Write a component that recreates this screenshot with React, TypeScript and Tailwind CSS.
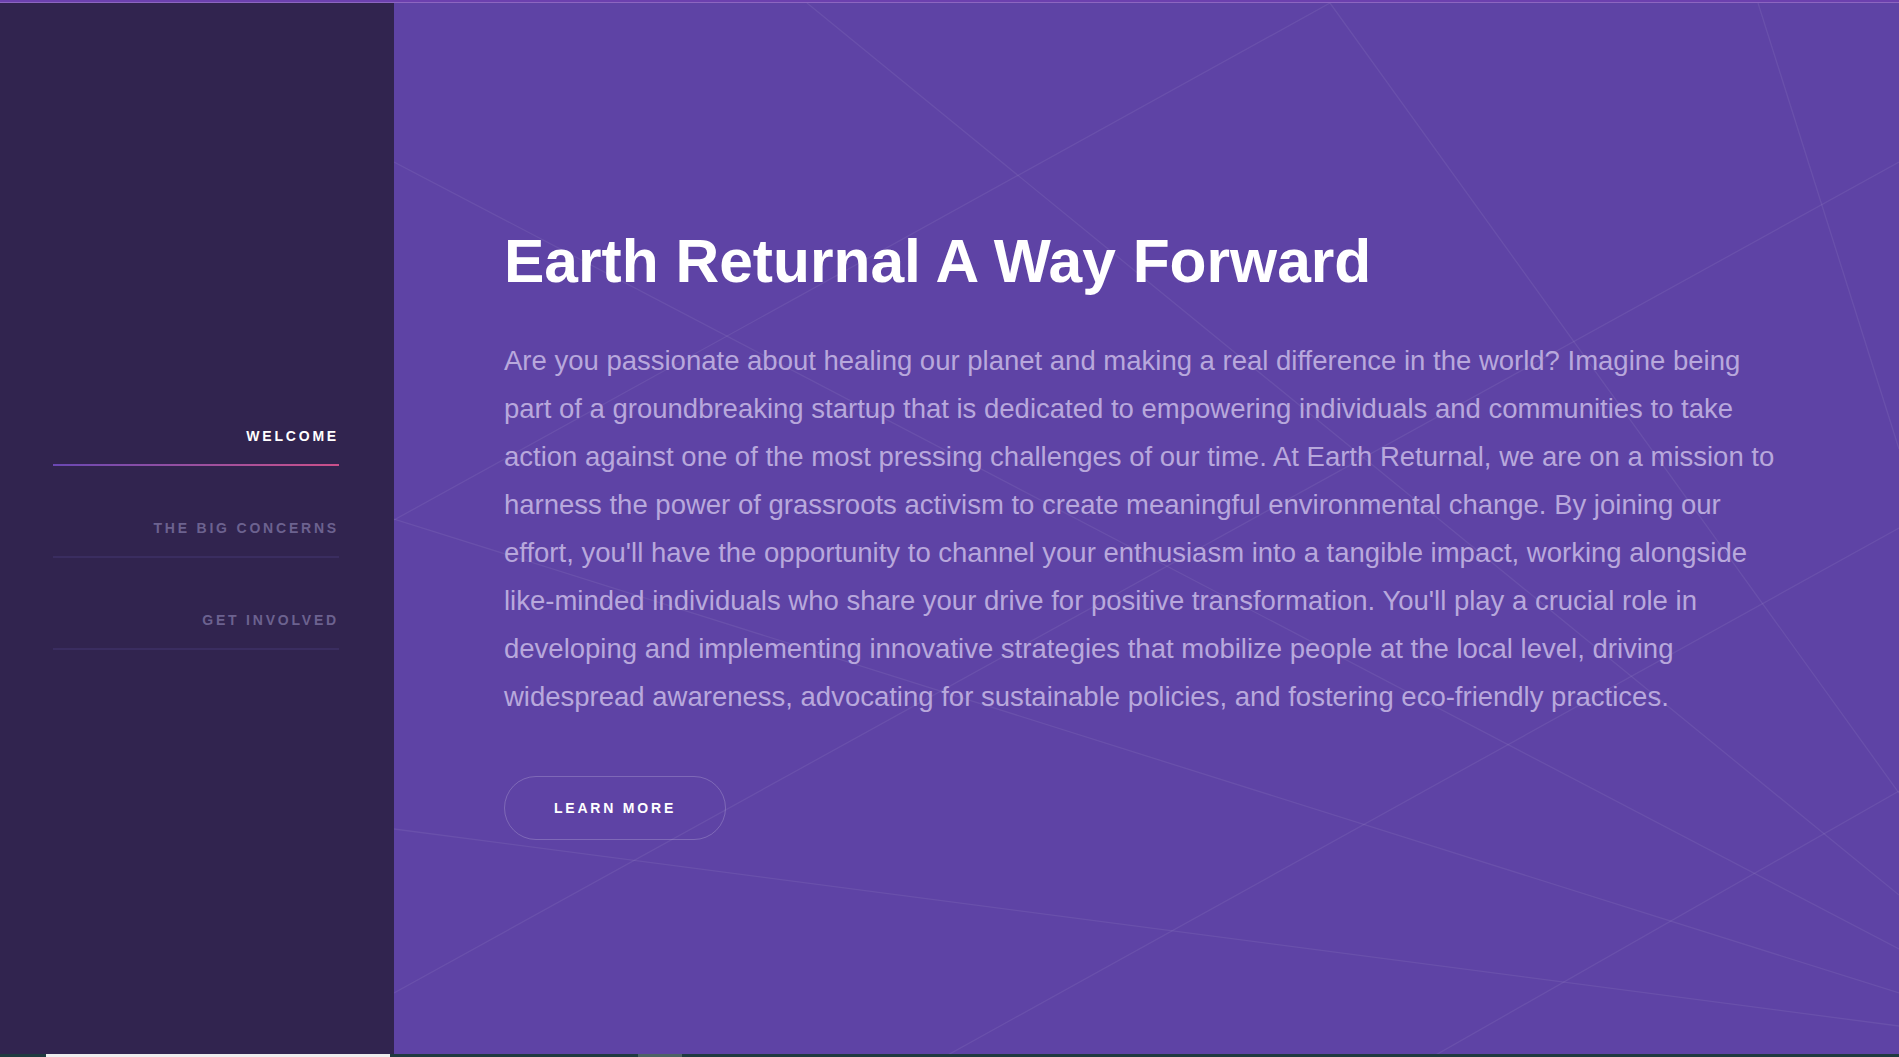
import React from "react";

const navItems = [
  { label: "WELCOME", active: true },
  { label: "THE BIG CONCERNS", active: false },
  { label: "GET INVOLVED", active: false },
];

// background mesh lines, coordinates relative to the main panel
const meshLines = [
  [413, 0, 1505, 892],
  [936, 0, 0, 517],
  [0, 159, 1505, 946],
  [0, 516, 1505, 990],
  [1505, 159, 0, 990],
  [936, 0, 1505, 790],
  [1364, 0, 1505, 446],
  [1505, 525, 552, 1053],
  [1505, 788, 1040, 1053],
  [0, 826, 1505, 1023],
];

function Sidebar() {
  return (
    <aside className="w-[394px] shrink-0 bg-[#31244f] pt-[423px] pl-[53px] pr-[55px]">
      <ul className="flex flex-col gap-[52px]">
        {navItems.map((item) => (
          <li key={item.label} className="flex flex-col">
            <a
              href="#"
              className={`block text-right text-[14px] leading-5 font-bold tracking-[0.2em] ${
                item.active ? "text-white" : "text-[#6c628f]"
              }`}
            >
              {item.label}
            </a>
            <div
              className={`mt-[18px] h-[2px] ${
                item.active ? "bg-gradient-to-r from-[#6a47b3] to-[#cb4f8a]" : "bg-[#3a2d60]"
              }`}
            />
          </li>
        ))}
      </ul>
    </aside>
  );
}

function Mesh() {
  return (
    <svg className="absolute inset-0 h-full w-full pointer-events-none" viewBox="0 0 1505 1051" preserveAspectRatio="none">
      {meshLines.map(([x1, y1, x2, y2], i) => (
        <line key={i} x1={x1} y1={y1} x2={x2} y2={y2} stroke="#ffffff" strokeOpacity="0.07" strokeWidth="1.3" />
      ))}
    </svg>
  );
}

export default function App() {
  return (
    <div className="flex h-screen w-full flex-col overflow-hidden font-['Liberation_Sans',Arial,sans-serif]">
      <div className="h-[2px] shrink-0 bg-[#6c40ae]" />
      <div className="h-px shrink-0 bg-[#8c66c0]" />

      <div className="flex min-h-0 flex-1">
        <Sidebar />

        <main className="relative flex-1 overflow-hidden bg-[#5e43a5]">
          <Mesh />
          <div className="relative pl-[110px] pt-[222px]">
            <h1 className="text-[60.5px] leading-[72px] font-bold text-white">Earth Returnal A Way Forward</h1>
            <p className="mt-[40px] w-[1282px] text-[27.5px] leading-[48px] text-[#b8a8dc]">
              Are you passionate about healing our planet and making a real difference in the world? Imagine being part
              of a groundbreaking startup that is dedicated to empowering individuals and communities to take action
              against one of the most pressing challenges of our time. At Earth Returnal, we are on a mission to harness
              the power of grassroots activism to create meaningful environmental change. By joining our effort, you'll
              have the opportunity to channel your enthusiasm into a tangible impact, working alongside like-minded
              individuals who share your drive for positive transformation. You'll play a crucial role in developing and
              implementing innovative strategies that mobilize people at the local level, driving widespread awareness,
              advocating for sustainable policies, and fostering eco-friendly practices.
            </p>
            <button className="mt-[55px] h-[64px] w-[222px] rounded-full border border-white/20 text-[14px] font-bold tracking-[0.2em] text-white">
              LEARN MORE
            </button>
          </div>
        </main>
      </div>

      <div className="flex h-[3px] shrink-0 bg-[#1f3a40]">
        <div className="ml-[46px] w-[344px] bg-[#eeeeee]" />
        <div className="ml-[248px] w-[44px] bg-[#4b6365]" />
      </div>
    </div>
  );
}
